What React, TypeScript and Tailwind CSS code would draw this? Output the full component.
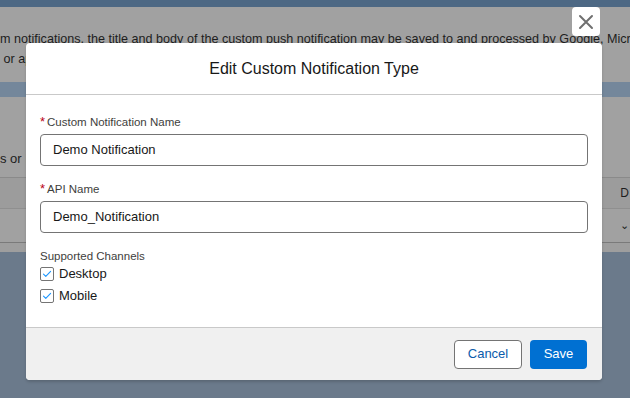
import React from "react";

const CheckIcon = () => (
  <svg width="10" height="8" viewBox="0 0 10 8" fill="none">
    <path d="M1.5 4.2 L3.8 6.4 L8.6 1.4" stroke="#1b96ff" strokeWidth="1.1" strokeLinecap="round" strokeLinejoin="round" />
  </svg>
);

const Checkbox = ({ label }: { label: string }) => (
  <label className="flex items-center gap-[5px] h-[22px]">
    <span className="w-[14px] h-[14px] rounded-[2px] border border-[#747474] bg-white flex items-center justify-center">
      <CheckIcon />
    </span>
    <span className="text-[13px] text-[#181818]">{label}</span>
  </label>
);

const Field = ({ label, value }: { label: string; value: string }) => (
  <div className="flex flex-col">
    <div className="text-[11.5px] text-[#3e3e3c] leading-[18px] mb-[3px] flex items-center">
      <span className="text-[#ba0517] mr-[2px] text-[13px]">*</span>
      {label}
    </div>
    <div className="h-[32px] border border-[#747474] rounded-[4px] bg-white flex items-center px-[12px] text-[13px] text-[#181818]">
      {value}
    </div>
  </div>
);

export default function App() {
  return (
    <div
      className="relative w-[630px] h-[398px] overflow-hidden bg-[#6b7a8b]"
      style={{ fontFamily: "'Liberation Sans', Arial, sans-serif" }}
    >
      {/* dimmed page behind the modal */}
      <div className="h-[7px] bg-[#4d6884]" />
      <div className="h-[75px] bg-[#a1a1a1] text-[12.6px] text-[#1d1d1d] pt-[22px] leading-[20px] whitespace-nowrap overflow-hidden">
        <div>m notifications, the title and body of the custom push notification may be saved to and processed by Google, Micros</div>
        <div>&nbsp;or ap</div>
      </div>
      <div className="h-[15px] bg-[#74879b]" />
      <div className="bg-[#a1a1a1]">
        <div className="h-[80px] text-[13px] text-[#1d1d1d] pt-[52px] whitespace-nowrap">
          s or <span className="text-[#1f4f84]">P</span>
        </div>
        <div className="h-[31px] border-t border-[#8a8a8a] bg-[#9c9c9c] flex justify-end items-center pr-[1px] text-[12px] text-[#1d1d1d]">
          D
        </div>
        <div className="h-[34px] border-t border-[#8f8f8f] flex justify-end items-center pr-[1px] text-[11px] text-[#1d1d1d]">
          ⌄
        </div>
        <div className="h-[10px] border-t border-[#7a7a7a] bg-[#9e9e9e]" />
      </div>

      {/* close button */}
      <button className="absolute left-[572px] top-[7px] w-[28px] h-[29px] bg-white rounded-[4px] flex items-center justify-center">
        <svg width="16" height="16" viewBox="0 0 16 16">
          <path d="M2 2 L14 14 M14 2 L2 14" stroke="#707070" strokeWidth="2" strokeLinecap="round" />
        </svg>
      </button>

      {/* modal */}
      <div className="absolute left-[26px] top-[43px] w-[576px] h-[337px] bg-white rounded-[4px] flex flex-col overflow-hidden shadow-[0_2px_3px_rgba(0,0,0,0.16)]">
        <div className="h-[52px] border-b border-[#c9c9c9] flex items-center justify-center text-[16px] text-[#181818]">
          Edit Custom Notification Type
        </div>
        <div className="flex-1 px-[14px] pt-[18px] flex flex-col">
          <div className="flex flex-col gap-[14px]">
            <Field label="Custom Notification Name" value="Demo Notification" />
            <Field label="API Name" value="Demo_Notification" />
          </div>
          <div className="mt-[14px] text-[11.5px] text-[#3e3e3c] leading-[18px]">Supported Channels</div>
          <div className="flex flex-col -mt-[2px]">
            <Checkbox label="Desktop" />
            <Checkbox label="Mobile" />
          </div>
        </div>
        <div className="h-[53px] border-t border-[#c9c9c9] bg-[#f0f0f0] flex items-center justify-end gap-[8px] pr-[15px]">
          <button className="h-[29px] w-[68px] rounded-[4px] border border-[#747474] bg-white text-[13px] text-[#0b5cab]">
            Cancel
          </button>
          <button className="h-[29px] w-[57px] rounded-[4px] bg-[#0070d2] text-[13px] text-white">
            Save
          </button>
        </div>
      </div>
    </div>
  );
}
